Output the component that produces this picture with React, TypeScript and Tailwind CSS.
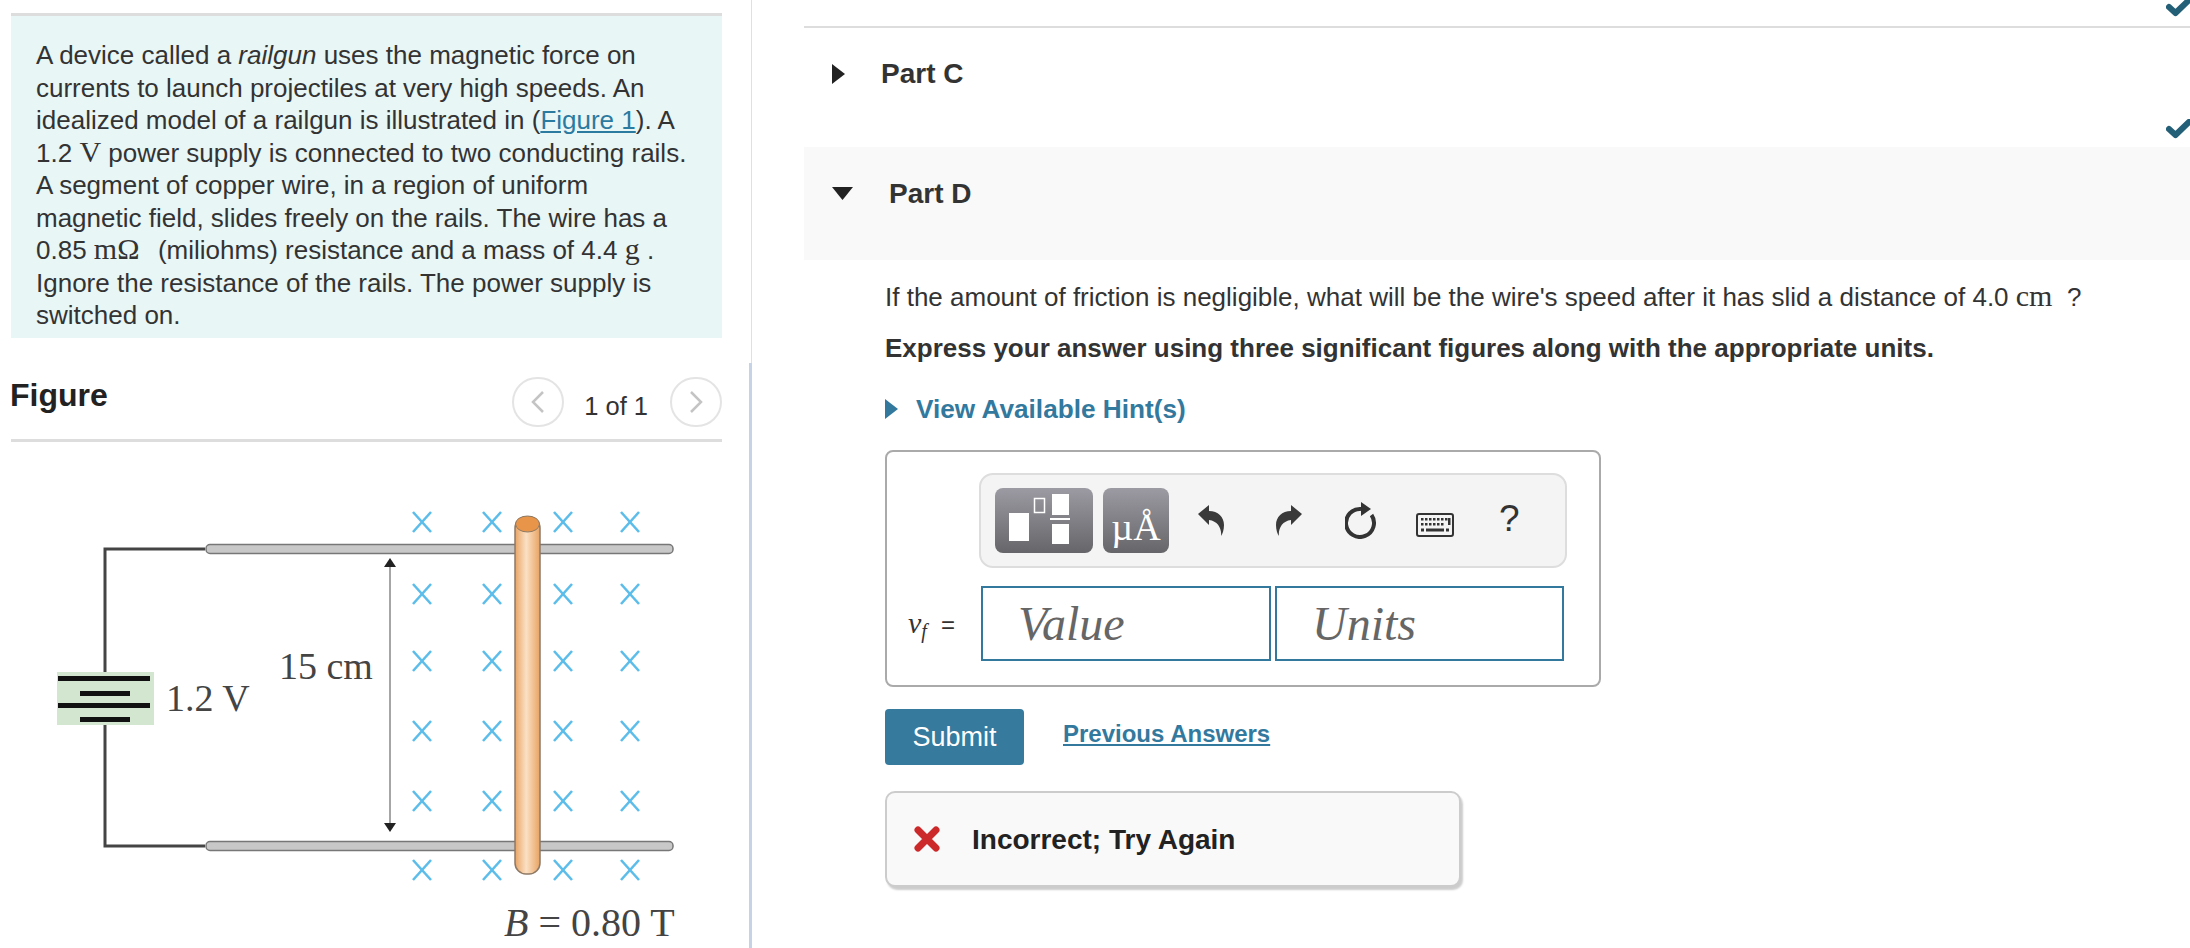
const xCols = [422, 492, 563, 630]
const xRows = [523, 595, 662, 732, 802, 871]

function Math({ children }: { children: React.ReactNode }) {
  return <span className="font-['Liberation_Serif',serif] text-[30px] leading-none">{children}</span>
}

function Triangle({ dir, color = '#222' }: { dir: 'right' | 'down'; color?: string }) {
  if (dir === 'right') {
    return (
      <svg width="13" height="20" viewBox="0 0 13 20" className="shrink-0">
        <polygon points="0,0 13,10 0,20" fill={color} />
      </svg>
    )
  }
  return (
    <svg width="21" height="13" viewBox="0 0 21 13" className="shrink-0">
      <polygon points="0,0 21,0 10.5,13" fill={color} />
    </svg>
  )
}

function Check() {
  return (
    <svg width="26" height="20" viewBox="0 0 26 20" className="shrink-0">
      <polyline points="3,10 9.5,16 23,3" fill="none" stroke="#245f78" strokeWidth="6" strokeLinejoin="round" strokeLinecap="round" />
    </svg>
  )
}

function Chevron({ left }: { left?: boolean }) {
  return (
    <div className="flex h-[50px] w-[52px] items-center justify-center rounded-full border-2 border-[#e4e4e4] bg-white">
      <svg width="16" height="24" viewBox="0 0 16 24">
        <polyline points={left ? '13,2 3,12 13,22' : '3,2 13,12 3,22'} fill="none" stroke="#c4c4c4" strokeWidth="2.5" />
      </svg>
    </div>
  )
}

function Figure() {
  return (
    <svg width="741" height="505" viewBox="0 443 741 505" className="block">
      <defs>
        <linearGradient id="wire" x1="0" x2="1" y1="0" y2="0">
          <stop offset="0" stopColor="#e9a566" />
          <stop offset="0.45" stopColor="#fbe0c4" />
          <stop offset="1" stopColor="#e8a362" />
        </linearGradient>
      </defs>
      <polyline points="205,550 105,550 105,680" fill="none" stroke="#444" strokeWidth="3" />
      <polyline points="205,847 105,847 105,722" fill="none" stroke="#444" strokeWidth="3" />
      <rect x="57" y="673" width="97" height="53" fill="#d3e6cf" />
      <rect x="58" y="677" width="92" height="5" fill="#111" />
      <rect x="80" y="692" width="50" height="5" fill="#111" />
      <rect x="58" y="704" width="92" height="5" fill="#111" />
      <rect x="80" y="718" width="50" height="5" fill="#111" />
      <text x="166" y="712" fontFamily="Liberation Serif" fontSize="38" fill="#444">1.2 V</text>
      <text x="279" y="680" fontFamily="Liberation Serif" fontSize="38" fill="#444">15 cm</text>

      <rect x="206" y="545.5" width="467" height="9" rx="4" fill="#c8c8c8" stroke="#777" strokeWidth="1.5" />
      <rect x="206" y="842.5" width="467" height="9" rx="4" fill="#c8c8c8" stroke="#777" strokeWidth="1.5" />

      <line x1="390" y1="565" x2="390" y2="828" stroke="#888" strokeWidth="1.5" />
      <polygon points="390,559 384,568 396,568" fill="#222" />
      <polygon points="390,833 384,824 396,824" fill="#222" />

      {xRows.map((y) =>
        xCols.map((x) => (
          <g key={`${x}-${y}`} stroke="#5cbdea" strokeWidth="2.6">
            <line x1={x - 9} y1={y - 10} x2={x + 9} y2={y + 10} />
            <line x1={x + 9} y1={y - 10} x2={x - 9} y2={y + 10} />
          </g>
        )),
      )}

      <rect x="515" y="518" width="25" height="357" rx="11" fill="url(#wire)" stroke="#8d7a66" strokeWidth="1.5" />
      <ellipse cx="527.5" cy="525" rx="12" ry="8" fill="#e8954a" stroke="#8d7a66" strokeWidth="1" />

      <text x="504" y="937" fontFamily="Liberation Serif" fontSize="40" fill="#444">
        <tspan fontStyle="italic">B</tspan> = 0.80 T
      </text>
    </svg>
  )
}

function TemplatesButton() {
  return (
    <div className="h-[65px] w-[98px] shrink-0 rounded-lg bg-linear-to-b from-[#9c9ba3] to-[#66666a]">
      <svg width="98" height="65" viewBox="0 0 98 65" className="block">
        <rect x="14" y="25" width="20" height="28" fill="#fff" />
        <rect x="39.5" y="10.5" width="10" height="14" fill="none" stroke="#fff" strokeWidth="1.5" />
        <rect x="57" y="6" width="17" height="21" fill="#fff" />
        <rect x="55" y="30" width="20" height="2" fill="#fff" />
        <rect x="57" y="36" width="17" height="20" fill="#fff" />
      </svg>
    </div>
  )
}

function UndoIcon({ flip }: { flip?: boolean }) {
  return (
    <svg width="26" height="31" viewBox="0 0 26 31" className={flip ? 'shrink-0 -scale-x-100' : 'shrink-0'}>
      <path d="M0 9 L11 0 L11 6 C20 6 26 12 26 20 C26 25 24.5 29 23 31 C24 24 20 16 11 15 L11 20 Z" fill="#3a3a3a" />
    </svg>
  )
}

function ResetIcon() {
  return (
    <svg width="33" height="37" viewBox="0 0 33 37" className="shrink-0">
      <path d="M26.5 13 A14 14 0 1 1 16 7" fill="none" stroke="#333" strokeWidth="4" />
      <polygon points="16,0 26,7 16,14" fill="#333" />
    </svg>
  )
}

function KeyboardIcon() {
  const top = [5, 9, 13, 17, 21, 25, 29]
  const mid = [5, 9, 13, 17, 21, 25]
  return (
    <svg width="38" height="24" viewBox="0 0 38 24" className="shrink-0">
      <rect x="1" y="1" width="36" height="22" rx="2" fill="#f4f4f4" stroke="#333" strokeWidth="2" />
      {top.map((x) => (
        <rect key={x} x={x} y="5" width="2.5" height="2.5" fill="#333" />
      ))}
      <rect x="32" y="5" width="2.5" height="7" fill="#333" />
      {mid.map((x) => (
        <rect key={x} x={x} y="10" width="2.5" height="2.5" fill="#333" />
      ))}
      <rect x="5" y="15.5" width="3" height="3" fill="#333" />
      <rect x="10" y="15.5" width="18" height="3" fill="#333" />
      <rect x="30" y="15.5" width="3" height="3" fill="#333" />
    </svg>
  )
}

export default function App() {
  return (
    <div className="flex h-[948px] w-[2190px] overflow-hidden bg-white font-['Liberation_Sans',sans-serif] text-[24px] text-[#333]">
      <div className="flex w-[749px] shrink-0 flex-col pl-[11px] pr-[27px] pt-[13px]">
        <div className="h-[325px] border-t-[3px] border-[#dddddd] bg-[#e8f6f6] pl-[25px] pr-[29px] pt-[23px] text-[26px] leading-[32.5px]">
          A device called a <i>railgun</i> uses the magnetic force on currents to launch projectiles at very
          high speeds. An idealized model of a railgun is illustrated in (
          <a className="text-[#2b7aa0] underline">Figure 1</a>). A 1.2 <Math>V</Math> power supply is connected to
          two conducting rails. A segment of copper wire, in a region of uniform magnetic field, slides freely on
          the rails. The wire has a 0.85 <Math>mΩ</Math>&nbsp;<span className="ml-[4px]" /> (miliohms) resistance and a mass of 4.4 <Math>g</Math> .
          Ignore the resistance of the rails. The power supply is switched on.
        </div>
        <div className="flex h-[104px] items-start justify-between border-b-[3px] border-[#dddddd] pt-[39px]">
          <h2 className="-ml-[1px] text-[32px] font-bold leading-[36px] text-[#222]">Figure</h2>
          <div className="flex items-start">
            <Chevron left />
            <span className="ml-[20px] mr-[22px] mt-[13px] text-[25.5px] leading-[32px]">1 of 1</span>
            <Chevron />
          </div>
        </div>
        <div className="-ml-[11px]">
          <Figure />
        </div>
      </div>

      <div className="flex w-[3px] shrink-0 flex-col">
        <div className="ml-auto h-[363px] w-[1px] bg-[#e0e0e0]" />
        <div className="flex-1 bg-[#c6d2e5]" />
      </div>

      <div className="ml-[52px] flex-1">
        <div className="flex h-[28px] items-end justify-end border-b-2 border-[#dddddd]">
          <div className="-mr-[2px] mb-[9px]">
            <Check />
          </div>
        </div>
        <div className="flex h-[119px] justify-between">
          <div className="flex items-center gap-[36px] self-start pl-[28px] pt-[29px]">
            <Triangle dir="right" />
            <span className="text-[28px] font-bold leading-[34px]">Part C</span>
          </div>
          <div className="-mr-[2px] mt-[91px]">
            <Check />
          </div>
        </div>
        <div className="flex h-[113px] items-start gap-[36px] bg-[#f9f9f9] pl-[28px] pt-[30px]">
          <div className="pt-[10px]">
            <Triangle dir="down" />
          </div>
          <span className="text-[28px] font-bold leading-[34px]">Part D</span>
        </div>

        <div className="pl-[81px]">
          <p className="mt-[20px] text-[26px] leading-[34px]">
            If the amount of friction is negligible, what will be the wire's speed after it has slid a distance of
            4.0 <Math>cm</Math>&nbsp; ?
          </p>
          <p className="mt-[17px] text-[26px] font-bold leading-[34px]">
            Express your answer using three significant figures along with the appropriate units.
          </p>
          <div className="mt-[27px] flex items-center gap-[18px] text-[26.2px] font-bold leading-[34px] text-[#33799e]">
            <Triangle dir="right" color="#33799e" />
            <span>View Available Hint(s)</span>
          </div>

          <div className="mt-[24px] h-[237px] w-[716px] rounded-lg border-2 border-[#aaaaaa] pl-[92px] pr-[32px] pt-[21px]">
            <div className="flex h-[95px] items-center rounded-[14px] border-2 border-[#dddddd] bg-[#f4f4f4] pl-[14px]">
              <TemplatesButton />
              <div className="ml-[10px] flex h-[65px] w-[66px] shrink-0 items-end justify-center rounded-lg bg-linear-to-b from-[#9c9ba3] to-[#66666a] pb-[6px] font-['Liberation_Serif',serif] text-[38px] leading-[40px] text-white">
                µÅ
              </div>
              <div className="ml-[29px] flex items-center">
                <UndoIcon />
                <div className="ml-[52px]">
                  <UndoIcon flip />
                </div>
                <div className="ml-[43px]">
                  <ResetIcon />
                </div>
                <div className="ml-[38px] pt-[8px]">
                  <KeyboardIcon />
                </div>
                <span className="ml-[45px] -mt-[4px] text-[37px] leading-[40px] text-[#333]">?</span>
              </div>
            </div>
            <div className="relative ml-[2px] mt-[18px] flex gap-[4px]">
              <div className="absolute -left-[73px] top-[20px] flex items-baseline whitespace-nowrap font-['Liberation_Serif',serif] text-[30px] italic leading-[34px]">
                v<sub className="text-[20px]">f</sub>
                <span className="ml-[14px] font-['Liberation_Sans',sans-serif] text-[24px] not-italic">=</span>
              </div>
              <div className="flex h-[75px] w-[290px] items-center border-2 border-[#33799e] pl-[35px] font-['Liberation_Serif',serif] text-[48px] italic text-[#666]">
                Value
              </div>
              <div className="flex h-[75px] w-[289px] items-center border-2 border-[#33799e] pl-[35px] font-['Liberation_Serif',serif] text-[48px] italic text-[#666]">
                Units
              </div>
            </div>
          </div>

          <div className="mt-[22px] flex items-start">
            <button className="flex h-[56px] w-[139px] items-center justify-center rounded bg-[#367a9d] text-[27px] text-white">
              Submit
            </button>
            <a className="ml-[39px] mt-[10px] font-bold leading-[30px] text-[#33799e] underline">Previous Answers</a>
          </div>

          <div className="mt-[26px] flex h-[96px] w-[576px] items-center gap-[32px] rounded-[10px] border-2 border-[#cccccc] bg-[#f9f9f9] pl-[27px] shadow-[2px_3px_2px_rgba(0,0,0,0.2)]">
            <svg width="26" height="26" viewBox="0 0 26 26" className="shrink-0">
              <path d="M4 4 L22 22 M22 4 L4 22" stroke="#cc2a2a" strokeWidth="7" strokeLinecap="round" />
            </svg>
            <span className="mt-[2px] text-[28px] font-bold text-[#222]">Incorrect; Try Again</span>
          </div>
        </div>
      </div>
    </div>
  )
}
